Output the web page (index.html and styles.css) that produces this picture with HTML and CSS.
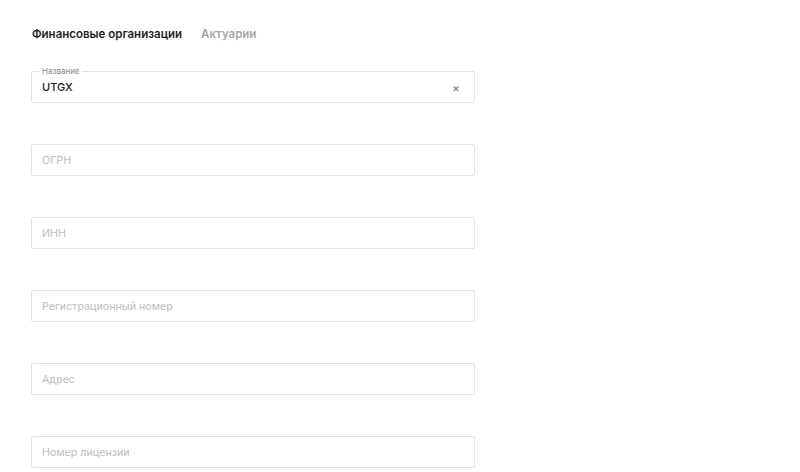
FILE: index.html
```html
<!DOCTYPE html>
<html lang="ru">
<head>
    <meta charset="UTF-8">
    <meta name="viewport" content="width=device-width, initial-scale=1.0">
    <title>Организации</title>
    <link rel="stylesheet" href="styles.css">
</head>
<body>

    <div class="page">
        <div class="tabs">
            <span class="tab active">Финансовые организации</span>
            <span class="tab">Актуарии</span>
        </div>

        <form class="filters">
            <div class="field filled">
                <span class="field-label">Название</span>
                <span class="field-value">UTGX</span>
                <span class="field-clear">×</span>
            </div>
            <div class="field">
                <span class="placeholder">ОГРН</span>
            </div>
            <div class="field">
                <span class="placeholder">ИНН</span>
            </div>
            <div class="field">
                <span class="placeholder">Регистрационный номер</span>
            </div>
            <div class="field">
                <span class="placeholder">Адрес</span>
            </div>
            <div class="field">
                <span class="placeholder">Номер лицензии</span>
            </div>
        </form>
    </div>

</body>
</html>
```

FILE: styles.css
```css
* {
    margin: 0;
    padding: 0;
    box-sizing: border-box;
}

body {
    font-family: 'Inter', 'Liberation Sans', sans-serif;
    background: #ffffff;
    color: #222;
    overflow: hidden;
}

.page {
    padding: 27px 0 0 31px;
    width: 475px;
}

.tabs {
    display: flex;
    gap: 19px;
    padding-left: 1px;
    margin-bottom: 30px;
}

.tab {
    font-size: 11.5px;
    font-weight: 600;
    line-height: 14px;
    color: #a5a5a5;
}

.tab.active {
    color: #1f1f1f;
}

.filters {
    display: flex;
    flex-direction: column;
    gap: 41px;
}

.field {
    position: relative;
    height: 32px;
    border: 1px solid #e2e2e2;
    border-radius: 2px;
    display: flex;
    align-items: center;
    padding: 0 10px;
}

.field-label {
    position: absolute;
    top: -6px;
    left: 8px;
    padding: 0 2px;
    background: #fff;
    font-size: 8px;
    line-height: 10px;
    color: #888;
}

.field-value {
    font-size: 11px;
    font-weight: 500;
    color: #222;
}

.field-clear {
    margin-left: auto;
    margin-right: 4px;
    font-size: 12px;
    color: #777;
}

.placeholder {
    font-size: 10.7px;
    color: #bdbdbd;
}
```
